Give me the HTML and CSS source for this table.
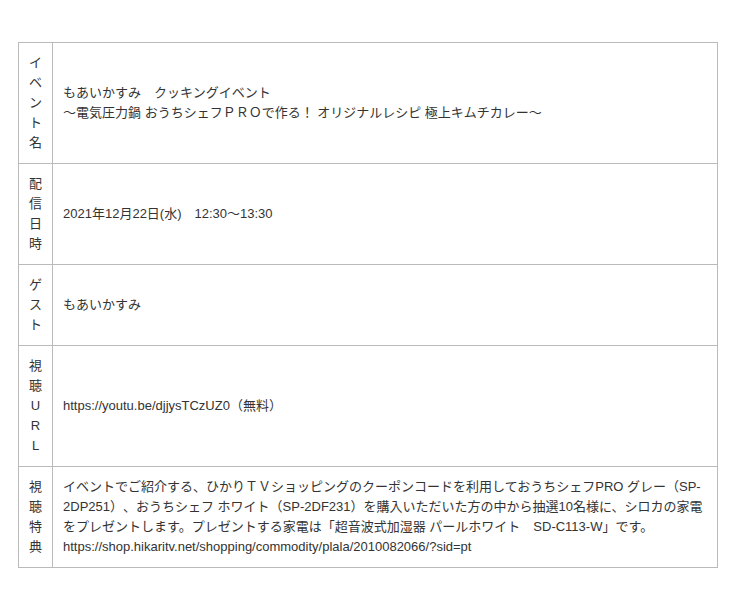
FILE: index.html
```html
<!DOCTYPE html>
<html lang="ja">
<head>
  <meta charset="UTF-8" />
  <meta name="viewport" content="width=device-width, initial-scale=1" />
  <title>もあいかすみ クッキングイベント</title>
  <link rel="stylesheet" href="styles.css">
</head>
<body>
  <table class="event-table">
    <tbody>
      <tr>
        <th>イベント名</th>
        <td>もあいかすみ　クッキングイベント<br>〜電気圧力鍋 おうちシェフＰＲＯで作る！ オリジナルレシピ 極上キムチカレー〜</td>
      </tr>
      <tr>
        <th>配信日時</th>
        <td>2021年12月22日(水)　12:30〜13:30</td>
      </tr>
      <tr>
        <th>ゲスト</th>
        <td>もあいかすみ</td>
      </tr>
      <tr>
        <th>視聴URL</th>
        <td>https://youtu.be/djjysTCzUZ0（無料）</td>
      </tr>
      <tr>
        <th>視聴特典</th>
        <td>イベントでご紹介する、ひかりＴＶショッピングのクーポンコードを利用しておうちシェフPRO グレー（SP-2DP251）、おうちシェフ ホワイト（SP-2DF231）を購入いただいた方の中から抽選10名様に、シロカの家電をプレゼントします。プレゼントする家電は「超音波式加湿器 パールホワイト　SD-C113-W」です。<br>https://shop.hikaritv.net/shopping/commodity/plala/2010082066/?sid=pt</td>
      </tr>
    </tbody>
  </table>
</body>
</html>
```

FILE: styles.css
```css
body {
  margin: 0;
  padding: 42px 18px;
  background: #fff;
  font-family: 'Liberation Sans', 'Noto Sans CJK JP', sans-serif;
  font-size: 13px;
  line-height: 20px;
  color: #333;
  text-spacing-trim: space-all;
}
.event-table {
  width: 700px;
  border-collapse: collapse;
}
.event-table th,
.event-table td {
  border: 1px solid #bbb;
  padding: 10px;
  vertical-align: middle;
  text-align: left;
  font-weight: normal;
}
.event-table th {
  width: 13px;
  text-align: center;
  word-break: break-all;
}
```
